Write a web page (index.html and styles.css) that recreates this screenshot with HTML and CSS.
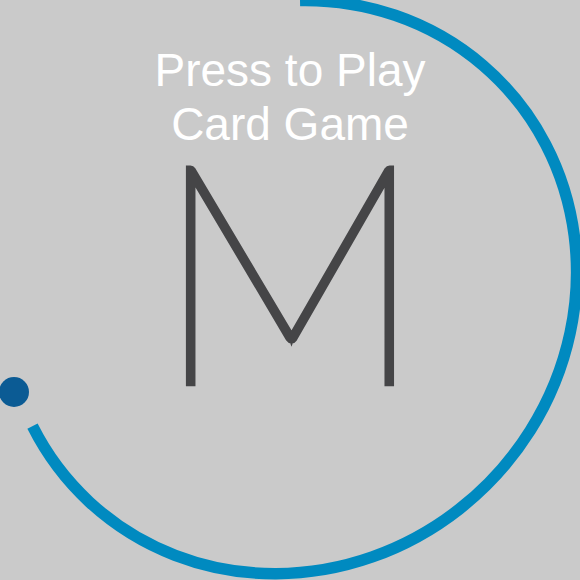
FILE: index.html
```html
<!DOCTYPE html>
<html>
<head>
<meta charset="utf-8">
<link rel="stylesheet" href="styles.css">
</head>
<body>
<main class="screen">
  <svg class="ring" width="580" height="580" viewBox="0 0 580 580" aria-hidden="true">
    <path class="ring-arc" d="M 300 0.5 A 294 279 -45 1 1 32.5 426.2"/>
    <circle class="ring-dot" cx="14" cy="392" r="15"/>
  </svg>
  <div class="title">
    <div class="title-line">Press to Play</div>
    <div class="title-line">Card Game</div>
  </div>
  <div class="letter">M</div>
</main>
</body>
</html>
```
FILE: styles.css
```css
html, body {
  margin: 0;
  padding: 0;
  background: #cacaca;
}
.screen {
  position: relative;
  width: 580px;
  height: 580px;
  overflow: hidden;
  display: flex;
  flex-direction: column;
  align-items: center;
  padding-top: 43px;
  box-sizing: border-box;
}
.ring {
  position: absolute;
  left: 0;
  top: 0;
}
.ring-arc {
  fill: none;
  stroke: #008ac0;
  stroke-width: 11.5;
  stroke-linecap: butt;
}
.ring-dot {
  fill: #0b5b94;
}
.title {
  font-family: "Liberation Sans", Arial, sans-serif;
  font-size: 46px;
  line-height: 54px;
  color: #ffffff;
  text-align: center;
}
.letter {
  font-family: "Lato", sans-serif;
  font-weight: 100;
  font-size: 306px;
  line-height: 228px;
  color: #454547;
  -webkit-text-stroke: 6.5px #454547;
  text-align: center;
}
```
